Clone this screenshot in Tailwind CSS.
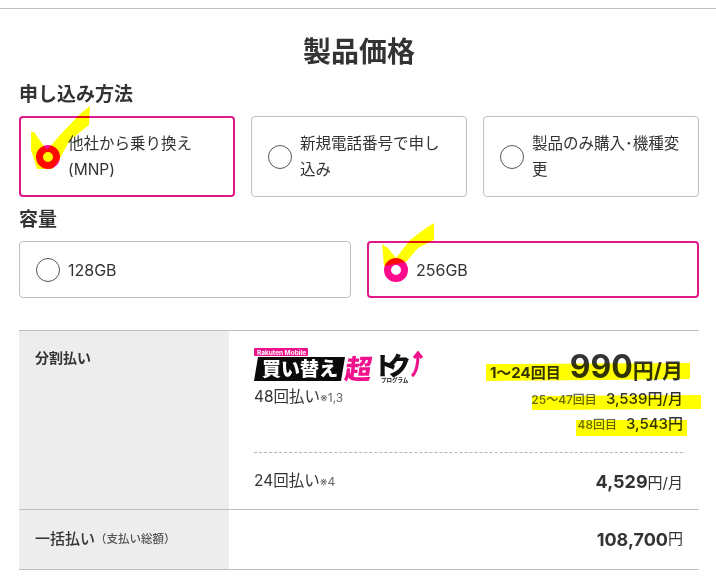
<!DOCTYPE html>
<html lang="ja">
<head>
    <meta charset="UTF-8">
    <title>製品価格</title>
    <script src="https://cdn.jsdelivr.net/npm/@tailwindcss/browser@4"></script>
</head>
<body class="relative bg-white text-[#333] font-['Inter','Noto_Sans_CJK_JP',sans-serif] h-[588px] overflow-hidden">

    <div class="h-px mt-2 bg-[#bfbfbf]"></div>

    <div class="px-[19px] w-[718px]">
        <h1 class="mt-[23px] h-10 leading-10 text-center text-[28px] font-bold">製品価格</h1>

        <!-- 申し込み方法 -->
        <h2 class="mt-[11px] h-6 leading-6 text-[19px] font-bold">申し込み方法</h2>
        <div class="mt-[9px] grid grid-cols-3 gap-4 w-[680px]">
            <div class="h-[81px] flex items-center gap-2 pl-4 pr-3 rounded border-2 border-[#e0188a]">
                <span class="shrink-0 size-6 rounded-full border-[7px] border-[#ff0a8c] bg-white -ml-px"></span>
                <span class="text-[15.5px] leading-[26px]">他社から乗り換え<br>(MNP)</span>
            </div>
            <div class="h-[81px] flex items-center gap-2 pl-4 pr-3 rounded border border-[#bfbfbf]">
                <span class="shrink-0 size-6 rounded-full border border-[#555] bg-white"></span>
                <span class="text-[15.5px] leading-[26px]">新規電話番号で申し込み</span>
            </div>
            <div class="h-[81px] flex items-center gap-2 pl-4 pr-3 rounded border border-[#bfbfbf]">
                <span class="shrink-0 size-6 rounded-full border border-[#555] bg-white"></span>
                <span class="text-[15.5px] leading-[26px]">製品のみ購入･機種変更</span>
            </div>
        </div>

        <!-- 容量 -->
        <h2 class="mt-[11px] h-6 leading-6 text-[19px] font-bold">容量</h2>
        <div class="mt-[9px] grid grid-cols-2 gap-4 w-[680px]">
            <div class="h-[57px] flex items-center gap-2 pl-4 rounded border border-[#bfbfbf]">
                <span class="shrink-0 size-6 rounded-full border border-[#555] bg-white"></span>
                <span class="text-[16px]">128GB</span>
            </div>
            <div class="h-[57px] flex items-center gap-2 pl-4 rounded border-2 border-[#e0188a]">
                <span class="shrink-0 size-6 rounded-full border-[7px] border-[#ff0a8c] bg-white -ml-px"></span>
                <span class="text-[16px]">256GB</span>
            </div>
        </div>

        <!-- 価格テーブル -->
        <div class="mt-8 w-[680px] border-t border-[#bfbfbf]">
            <div class="flex h-[179px] border-b border-[#bfbfbf]">
                <div class="w-[210px] shrink-0 bg-[#ededed] pl-4 pt-[17px] text-[14px] leading-5 font-bold">分割払い</div>
                <div class="flex-1 pl-[25px] pr-4">
                    <div class="h-[122px] border-b border-dashed border-[#b5b5b5] flex justify-between">
                        <div class="pt-[17px]">
                            <svg class="block" width="170" height="36" viewBox="0 0 170 36">
                                <rect x="0" y="0" width="54" height="8" rx="1" fill="#f0128c"/>
                                <text x="3" y="6.5" font-size="6.5" font-weight="700" fill="#fff">Rakuten Mobile</text>
                                <polygon points="4,9 91,9 87,33 0,33" fill="#0a0a0a"/>
                                <text x="8" y="28" font-size="19" font-weight="900" fill="#fff" textLength="76">買い替え</text>
                                <text x="90" y="31" font-size="27" font-weight="900" fill="#f0128c" transform="skewX(-8)" dx="4" textLength="30">超</text>
                                <text x="119" y="27" font-size="25" font-weight="900" fill="#111" textLength="38">トク</text>
                                <text x="127" y="34" font-size="5.5" font-weight="700" fill="#111">プログラム</text>
                                <path d="M158 28 C163 24 164 16 164 6 M160 10 L164 5 L168 10" fill="none" stroke="#f0128c" stroke-width="3"/>
                            </svg>
                            <p class="mt-[1px] text-[15.5px] leading-6">48回払い<span class="text-[12px] text-[#666]">※1,3</span></p>
                        </div>
                        <div class="text-right pt-[19px]">
                            <p class="h-[33px] leading-[33px] font-bold whitespace-nowrap"><span class="text-[15px]">1〜24回目</span><span class="ml-[9px] text-[32px]">990</span><span class="text-[21px]">円/月</span></p>
                            <p class="mt-[4px] h-[22px] leading-[22px] whitespace-nowrap font-medium"><span class="text-[12px] text-[#666]">25〜47回目</span><span class="ml-[9px] text-[15px]">3,539</span><span class="text-[15px]">円/月</span></p>
                            <p class="mt-[3px] h-[22px] leading-[22px] whitespace-nowrap font-medium"><span class="text-[12px] text-[#666]">48回目</span><span class="ml-[9px] text-[15px]">3,543</span><span class="text-[15px]">円</span></p>
                        </div>
                    </div>
                    <div class="h-[56px] flex items-center justify-between">
                        <p class="text-[15.5px]">24回払い<span class="text-[12px] text-[#666]">※4</span></p>
                        <p class="whitespace-nowrap"><span class="text-[18px] font-bold">4,529</span><span class="text-[15px]">円/月</span></p>
                    </div>
                </div>
            </div>
            <div class="flex h-[60px] border-b border-[#bfbfbf]">
                <div class="w-[210px] shrink-0 bg-[#ededed] pl-4 flex items-center text-[15px] font-medium whitespace-nowrap">一括払い<span class="text-[11.5px] text-[#555]">（支払い総額）</span></div>
                <div class="flex-1 pr-4 flex items-center justify-end whitespace-nowrap"><span class="text-[18px] font-bold">108,700</span><span class="text-[15px]">円</span></div>
            </div>
        </div>
    </div>

    <!-- hand drawn yellow marker on top of the page -->
    <svg class="absolute inset-0 mix-blend-multiply pointer-events-none" width="716" height="588" viewBox="0 0 716 588">
        <g fill="#ffff00">
            <polygon points="31,132 34,132 41,142 47,150 60,135 80,114 90,106 89,125 70,140 59,160 52,169 37,169 31,150"/>
            <polygon points="382,244 388,248 396,258 410,240 426,228 434,223 434,240 418,248 406,262 384,266"/>
            <polygon points="486,364 690,363 690,379 600,380 486,381"/>
            <polygon points="532,396 701,395 701,409 532,410"/>
            <polygon points="576,420 687,420 687,436 576,436"/>
        </g>
    </svg>
</body>
</html>
